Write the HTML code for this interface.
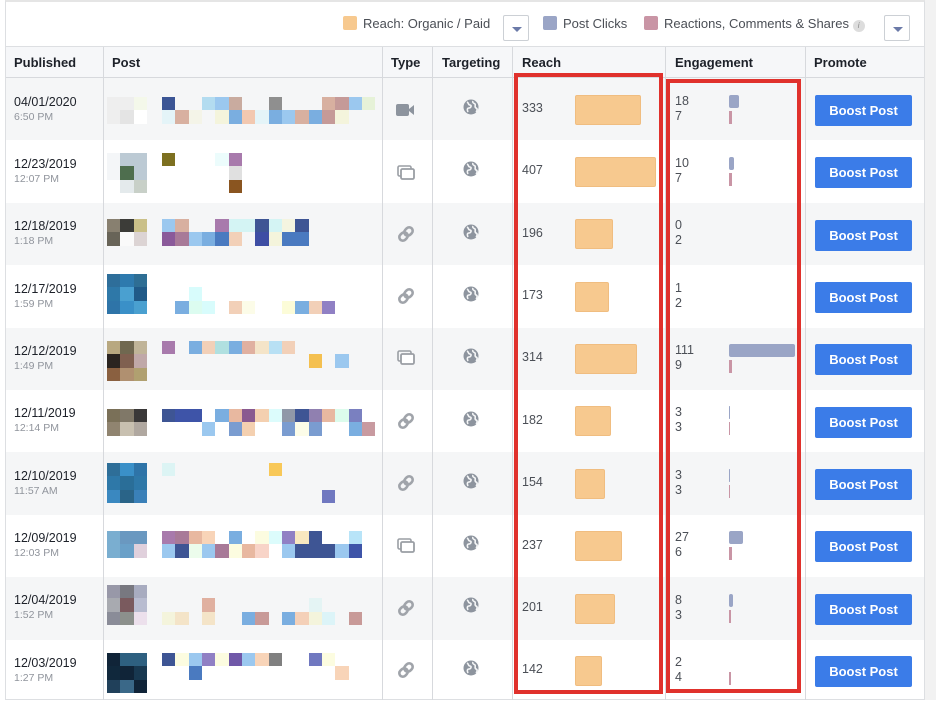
<!DOCTYPE html>
<html><head><meta charset="utf-8"><style>
*{margin:0;padding:0;box-sizing:border-box}
body{width:936px;height:700px;overflow:hidden;background:#fff;font-family:"Liberation Sans",Arial,sans-serif;position:relative;color:#1d2129}
.a{position:absolute}
.hdr{font-weight:bold;font-size:13px;color:#1d2129;top:55px}
.vl{position:absolute;top:47px;bottom:0;width:1px;background:#d7d9dd}
.row{position:absolute;left:6px;width:918px;height:62.4px}
.g{background:#f5f6f7}
.d{position:absolute;left:14px;font-size:12.5px;color:#1d2129}
.t{position:absolute;left:14px;font-size:10.5px;color:#90949c}
.px{position:absolute;display:flex;flex-direction:column}
.px div{display:flex;height:13.33px}
.px i{display:block;width:13.33px;height:13.33px}
.num{position:absolute;font-size:12.5px;color:#4b4f56}
.rb{position:absolute;left:569px;height:30px;background:#f7c98f;border-radius:2px;border:1px solid #f0bd80}
.cb{position:absolute;left:723px;height:13px;background:#9aa5c6;border-radius:2px}
.eb{position:absolute;left:723px;width:3px;height:13px;background:#c995a5}
.btn{position:absolute;left:809px;width:97px;height:31px;background:#3b7ce8;color:#fff;font-weight:bold;font-size:13px;text-align:center;line-height:31px;border-radius:2px}
.ic{position:absolute}
.lg{display:inline-block;width:14px;height:14px;border-radius:2px;vertical-align:-2px;margin-right:6px}
.dd{position:absolute;width:26px;height:26px;border:1px solid #ccd0d5;border-radius:2px;background:#fff}
.dd:after{content:"";position:absolute;left:8px;top:11px;border-left:5px solid transparent;border-right:5px solid transparent;border-top:5px solid #6b7aa8}
</style></head><body>
<div class="a" style="left:5px;top:0;width:920px;height:700px;border:1px solid #dddfe2;border-top:2px solid #e5e5e5"></div>
<div class="a" style="left:925px;top:0;width:11px;height:700px;background:#f2f2f2"></div>
<!-- legend -->
<div class="a" style="left:343px;top:16px;font-size:13px;color:#4b4f56"><span class="lg" style="background:#f7c98f"></span>Reach: Organic / Paid</div>
<div class="dd" style="left:503px;top:15px"></div>
<div class="a" style="left:543px;top:16px;font-size:13px;color:#4b4f56"><span class="lg" style="background:#9aa5c6"></span>Post Clicks</div>
<div class="a" style="left:644px;top:16px;font-size:13px;color:#4b4f56"><span class="lg" style="background:#c995a5"></span>Reactions, Comments &amp; Shares <span style="display:inline-block;width:12px;height:12px;border-radius:6px;background:#ddd;font-size:8px;color:#888;text-align:center;line-height:12px;font-style:italic">i</span></div>
<div class="dd" style="left:884px;top:15px"></div>
<!-- header -->
<div class="a" style="left:6px;top:46px;width:918px;height:32px;background:#f6f7f9;border-top:1px solid #dddfe2;border-bottom:1px solid #d7d9dd"></div>
<div class="a hdr" style="left:14px">Published</div>
<div class="a hdr" style="left:112px">Post</div>
<div class="a hdr" style="left:391px">Type</div>
<div class="a hdr" style="left:442px">Targeting</div>
<div class="a hdr" style="left:522px">Reach</div>
<div class="a hdr" style="left:675px">Engagement</div>
<div class="a hdr" style="left:814px">Promote</div>

<div class="row g" style="top:78px"></div>
<div class="row" style="top:140.4px"></div>
<div class="row g" style="top:202.8px"></div>
<div class="row" style="top:265.2px"></div>
<div class="row g" style="top:327.6px"></div>
<div class="row" style="top:390px"></div>
<div class="row g" style="top:452.4px"></div>
<div class="row" style="top:514.8px"></div>
<div class="row g" style="top:577.2px"></div>
<div class="row" style="top:639.6px"></div>

<div class="vl" style="left:103px"></div><div class="vl" style="left:382px"></div><div class="vl" style="left:432px"></div><div class="vl" style="left:512px"></div><div class="vl" style="left:665px"></div><div class="vl" style="left:805px"></div>

<svg width="0" height="0" style="position:absolute"><defs>
<g id="globe"><circle cx="8" cy="8" r="7.5" fill="#8d949e"/><path d="M4 3c2 1 1 3 3 3s1 3-1 3-2 2-1 4M10 2c-1 2 1 2 2 3s-1 3 1 4 1 3 0 4" stroke="#f5f6f7" stroke-width="1.6" fill="none"/></g>
<g id="link"><g transform="rotate(-45 9 9)" fill="none" stroke="#a0a4aa" stroke-width="2.6"><rect x="1" y="5.5" width="9" height="7" rx="3.5"/><rect x="8" y="5.5" width="9" height="7" rx="3.5"/></g></g>
<g id="gal"><rect x="1" y="1" width="13" height="10" rx="1.5" fill="none" stroke="#9a9ea4" stroke-width="1.6"/><rect x="4" y="4" width="13" height="10" rx="1.5" fill="#fff" stroke="#9a9ea4" stroke-width="1.8"/></g>
<g id="vid"><rect x="0" y="2" width="13" height="12" rx="2" fill="#8d949e"/><path d="M13 7l5-4v10l-5-4z" fill="#8d949e"/></g>
</defs></svg>

<!-- ROW DATA -->
<!-- r1 -->
<div class="d" style="top:95px">04/01/2020</div><div class="t" style="top:111px">6:50 PM</div>
<div class="px" style="left:107px;top:97px"><div><i style="background:#eee"></i><i style="background:#eee"></i><i style="background:#f4f8ea"></i></div><div><i style="background:#eee"></i><i style="background:#e4e4e4"></i><i style="background:#fff"></i></div></div>
<div class="px" style="left:162px;top:97px"><div><i style="background:#3b5595"></i><i></i><i></i><i style="background:#b3dcf0"></i><i style="background:#9bc8ef"></i><i style="background:#c9ab9f"></i><i></i><i></i><i style="background:#8f8f8f"></i><i></i><i></i><i></i><i style="background:#d8b0a0"></i><i style="background:#c59a98"></i><i style="background:#9bc8ef"></i><i style="background:#e6f2d8"></i></div><div><i style="background:#e4f4f8"></i><i style="background:#d8b0a0"></i><i style="background:#f4f4e8"></i><i></i><i style="background:#f4f4dc"></i><i style="background:#7aaee0"></i><i style="background:#f2c8b0"></i><i style="background:#e4f4f8"></i><i style="background:#7aaee0"></i><i style="background:#9bc8ef"></i><i style="background:#d8b0a0"></i><i style="background:#7aaee0"></i><i style="background:#c59a98"></i><i style="background:#f4f4dc"></i></div></div>
<svg class="ic" style="left:396px;top:102px" width="20" height="16"><use href="#vid"/></svg>
<svg class="ic" style="left:463px;top:99px" width="16" height="16"><use href="#globe"/></svg>
<div class="num" style="left:522px;top:101px">333</div><div class="rb" style="left:575px;top:95px;width:66px"></div>
<div class="num" style="left:675px;top:94px">18</div><div class="num" style="left:675px;top:109px">7</div><div class="cb" style="left:729px;top:95px;width:10px"></div><div class="eb" style="left:729px;top:111px"></div>
<div class="btn" style="left:815px;top:95px">Boost Post</div>
<!-- r2 -->
<div class="d" style="top:157px">12/23/2019</div><div class="t" style="top:173px">12:07 PM</div>
<div class="px" style="left:107px;top:153px"><div><i style="background:#f4f6f8"></i><i style="background:#bccad4"></i><i style="background:#bccad4"></i></div><div><i style="background:#f4f6f8"></i><i style="background:#4e6e4e"></i><i style="background:#bccad4"></i></div><div><i></i><i style="background:#e4eaec"></i><i style="background:#c8d0c8"></i></div></div>
<div class="px" style="left:162px;top:153px"><div><i style="background:#7d7020"></i><i></i><i></i><i></i><i style="background:#ecfcfc"></i><i style="background:#a87aac"></i></div><div><i></i><i></i><i></i><i></i><i></i><i style="background:#e0e0e0"></i></div><div><i></i><i></i><i></i><i></i><i></i><i style="background:#8a5520"></i></div></div>
<svg class="ic" style="left:397px;top:165px" width="18" height="16"><use href="#gal"/></svg>
<svg class="ic" style="left:463px;top:161px" width="16" height="16"><use href="#globe"/></svg>
<div class="num" style="left:522px;top:163px">407</div><div class="rb" style="left:575px;top:157px;width:81px"></div>
<div class="num" style="left:675px;top:156px">10</div><div class="num" style="left:675px;top:171px">7</div><div class="cb" style="left:729px;top:157px;width:5px"></div><div class="eb" style="left:729px;top:173px"></div>
<div class="btn" style="left:815px;top:157px">Boost Post</div>
<!-- r3 -->
<div class="d" style="top:219px">12/18/2019</div><div class="t" style="top:235px">1:18 PM</div>
<div class="px" style="left:107px;top:219px"><div><i style="background:#888070"></i><i style="background:#3c3c38"></i><i style="background:#cac088"></i></div><div><i style="background:#686458"></i><i style="background:#fafafa"></i><i style="background:#dcd4d4"></i></div></div>
<div class="px" style="left:162px;top:219px"><div><i style="background:#9bc8ef"></i><i style="background:#d8b0a0"></i><i></i><i></i><i style="background:#a87aac"></i><i style="background:#d4f4f4"></i><i style="background:#d4f4f4"></i><i style="background:#3e5594"></i><i style="background:#d4f4f4"></i><i style="background:#f4f4e0"></i><i style="background:#3e5594"></i></div><div><i style="background:#8a5a9a"></i><i style="background:#a87a98"></i><i style="background:#9bc8ef"></i><i style="background:#7aaee0"></i><i style="background:#4a7ac0"></i><i style="background:#f2d0b8"></i><i></i><i style="background:#3e4ea4"></i><i style="background:#f4f4dc"></i><i style="background:#4a7ac0"></i><i style="background:#4a7ac0"></i></div></div>
<svg class="ic" style="left:397px;top:225px" width="18" height="18"><use href="#link"/></svg>
<svg class="ic" style="left:463px;top:224px" width="16" height="16"><use href="#globe"/></svg>
<div class="num" style="left:522px;top:226px">196</div><div class="rb" style="left:575px;top:219px;width:38px"></div>
<div class="num" style="left:675px;top:218px">0</div><div class="num" style="left:675px;top:233px">2</div>
<div class="btn" style="left:815px;top:220px">Boost Post</div>
<!-- r4 -->
<div class="d" style="top:282px">12/17/2019</div><div class="t" style="top:298px">1:59 PM</div>
<div class="px" style="left:107px;top:274px"><div><i style="background:#2e6e9a"></i><i style="background:#2e7aae"></i><i style="background:#2e6e94"></i></div><div><i style="background:#2e78a8"></i><i style="background:#4aa0d0"></i><i style="background:#205a88"></i></div><div><i style="background:#2e74a8"></i><i style="background:#3a90c8"></i><i style="background:#4aa0d0"></i></div></div>
<div class="px" style="left:162px;top:274px"><div></div><div><i></i><i></i><i style="background:#d8fcfc"></i></div><div><i></i><i style="background:#7aaee0"></i><i style="background:#dcfcf0"></i><i style="background:#d8fcfc"></i><i></i><i style="background:#f2d0b8"></i><i style="background:#fcfce8"></i><i></i><i></i><i style="background:#fcfcd8"></i><i style="background:#7aaee0"></i><i style="background:#f2d0b8"></i><i style="background:#9080c4"></i></div></div>
<svg class="ic" style="left:397px;top:287px" width="18" height="18"><use href="#link"/></svg>
<svg class="ic" style="left:463px;top:286px" width="16" height="16"><use href="#globe"/></svg>
<div class="num" style="left:522px;top:288px">173</div><div class="rb" style="left:575px;top:282px;width:34px"></div>
<div class="num" style="left:675px;top:281px">1</div><div class="num" style="left:675px;top:296px">2</div>
<div class="btn" style="left:815px;top:282px">Boost Post</div>
<!-- r5 -->
<div class="d" style="top:344px">12/12/2019</div><div class="t" style="top:360px">1:49 PM</div>
<div class="px" style="left:107px;top:341px"><div><i style="background:#b8a880"></i><i style="background:#706850"></i><i style="background:#c0b498"></i></div><div><i style="background:#2a2420"></i><i style="background:#806050"></i><i style="background:#c0a8a8"></i></div><div><i style="background:#8a6040"></i><i style="background:#b09070"></i><i style="background:#b0a070"></i></div></div>
<div class="px" style="left:162px;top:341px"><div><i style="background:#a87aac"></i><i></i><i style="background:#7aaee0"></i><i style="background:#f2d0b8"></i><i style="background:#b0e0e0"></i><i style="background:#7aaee0"></i><i style="background:#e0b0a0"></i><i style="background:#f4e4c8"></i><i style="background:#b8e0f4"></i><i style="background:#f2d0b8"></i></div><div><i></i><i></i><i></i><i></i><i></i><i></i><i></i><i></i><i></i><i></i><i></i><i style="background:#f4c050"></i><i></i><i style="background:#9bc8ef"></i></div></div>
<svg class="ic" style="left:397px;top:350px" width="18" height="16"><use href="#gal"/></svg>
<svg class="ic" style="left:463px;top:348px" width="16" height="16"><use href="#globe"/></svg>
<div class="num" style="left:522px;top:350px">314</div><div class="rb" style="left:575px;top:344px;width:62px"></div>
<div class="num" style="left:675px;top:343px">111</div><div class="num" style="left:675px;top:358px">9</div><div class="cb" style="left:729px;top:344px;width:66px"></div><div class="eb" style="left:729px;top:360px"></div>
<div class="btn" style="left:815px;top:344px">Boost Post</div>
<!-- r6 -->
<div class="d" style="top:406px">12/11/2019</div><div class="t" style="top:422px">12:14 PM</div>
<div class="px" style="left:107px;top:409px"><div><i style="background:#7a7058"></i><i style="background:#807868"></i><i style="background:#3a3838"></i></div><div><i style="background:#908470"></i><i style="background:#c8c0b0"></i><i style="background:#b0a8a0"></i></div></div>
<div class="px" style="left:162px;top:409px"><div><i style="background:#3e5594"></i><i style="background:#3e54a8"></i><i style="background:#3e54a8"></i><i></i><i style="background:#7aaee0"></i><i style="background:#e8b8a0"></i><i style="background:#8a5a90"></i><i style="background:#f4d0b0"></i><i style="background:#dcfcfc"></i><i style="background:#9098a8"></i><i style="background:#3e5594"></i><i style="background:#9080b0"></i><i style="background:#e8b8a0"></i><i style="background:#dcfcec"></i><i style="background:#7a80c0"></i></div><div><i></i><i></i><i></i><i style="background:#9bc8ef"></i><i></i><i style="background:#7a9cd0"></i><i style="background:#f4d0b0"></i><i></i><i></i><i style="background:#7a9cd0"></i><i style="background:#fcfce8"></i><i style="background:#7a9cd0"></i><i></i><i></i><i style="background:#7aaee0"></i><i style="background:#c89aa0"></i></div></div>
<svg class="ic" style="left:397px;top:412px" width="18" height="18"><use href="#link"/></svg>
<svg class="ic" style="left:463px;top:411px" width="16" height="16"><use href="#globe"/></svg>
<div class="num" style="left:522px;top:413px">182</div><div class="rb" style="left:575px;top:406px;width:36px"></div>
<div class="num" style="left:675px;top:405px">3</div><div class="num" style="left:675px;top:420px">3</div><div class="cb" style="left:729px;top:406px;width:1px"></div><div class="eb" style="left:729px;top:422px;width:1px"></div>
<div class="btn" style="left:815px;top:407px">Boost Post</div>
<!-- r7 -->
<div class="d" style="top:469px">12/10/2019</div><div class="t" style="top:485px">11:57 AM</div>
<div class="px" style="left:107px;top:463px"><div><i style="background:#2e6e98"></i><i style="background:#3a90c8"></i><i style="background:#2e74a8"></i></div><div><i style="background:#2e78a8"></i><i style="background:#2a6e98"></i><i style="background:#2e78a8"></i></div><div><i style="background:#3a88c0"></i><i style="background:#2a6488"></i><i style="background:#3a80b8"></i></div></div>
<div class="px" style="left:162px;top:463px"><div><i style="background:#dcf4f4"></i><i></i><i></i><i></i><i></i><i></i><i></i><i></i><i style="background:#f8c858"></i></div><div></div><div><i></i><i></i><i></i><i></i><i></i><i></i><i></i><i></i><i></i><i></i><i></i><i></i><i style="background:#7078c0"></i></div></div>
<svg class="ic" style="left:397px;top:474px" width="18" height="18"><use href="#link"/></svg>
<svg class="ic" style="left:463px;top:473px" width="16" height="16"><use href="#globe"/></svg>
<div class="num" style="left:522px;top:475px">154</div><div class="rb" style="left:575px;top:469px;width:30px"></div>
<div class="num" style="left:675px;top:468px">3</div><div class="num" style="left:675px;top:483px">3</div><div class="cb" style="left:729px;top:469px;width:1px"></div><div class="eb" style="left:729px;top:485px;width:1px"></div>
<div class="btn" style="left:815px;top:469px">Boost Post</div>
<!-- r8 -->
<div class="d" style="top:531px">12/09/2019</div><div class="t" style="top:547px">12:03 PM</div>
<div class="px" style="left:107px;top:531px"><div><i style="background:#7aaed0"></i><i style="background:#6a98c0"></i><i style="background:#6a98c0"></i></div><div><i style="background:#7aaed0"></i><i style="background:#6aa0c8"></i><i style="background:#e0d0dc"></i></div></div>
<div class="px" style="left:162px;top:531px"><div><i style="background:#a87aac"></i><i style="background:#a87a98"></i><i style="background:#e8b8a0"></i><i style="background:#f8d4b8"></i><i></i><i style="background:#7aaee0"></i><i></i><i style="background:#fcfce0"></i><i style="background:#dcfcfc"></i><i style="background:#9080c4"></i><i style="background:#f8e8c0"></i><i style="background:#3e5594"></i><i></i><i></i><i style="background:#b8e4f8"></i></div><div><i style="background:#9bc8ef"></i><i style="background:#3e5594"></i><i style="background:#ecfcec"></i><i style="background:#9bc8ef"></i><i style="background:#a87a98"></i><i style="background:#fcfce0"></i><i style="background:#e8b8a0"></i><i style="background:#f8d4c8"></i><i></i><i style="background:#9bc8ef"></i><i style="background:#3e5594"></i><i style="background:#3e5594"></i><i style="background:#3e5594"></i><i style="background:#9bc8ef"></i><i style="background:#3e54a8"></i></div></div>
<svg class="ic" style="left:397px;top:538px" width="18" height="16"><use href="#gal"/></svg>
<svg class="ic" style="left:463px;top:535px" width="16" height="16"><use href="#globe"/></svg>
<div class="num" style="left:522px;top:538px">237</div><div class="rb" style="left:575px;top:531px;width:47px"></div>
<div class="num" style="left:675px;top:530px">27</div><div class="num" style="left:675px;top:545px">6</div><div class="cb" style="left:729px;top:531px;width:14px"></div><div class="eb" style="left:729px;top:547px"></div>
<div class="btn" style="left:815px;top:531px">Boost Post</div>
<!-- r9 -->
<div class="d" style="top:593px">12/04/2019</div><div class="t" style="top:609px">1:52 PM</div>
<div class="px" style="left:107px;top:585px"><div><i style="background:#9898a8"></i><i style="background:#787880"></i><i style="background:#a8acc0"></i></div><div><i style="background:#a8aab0"></i><i style="background:#7a5a5e"></i><i style="background:#b8bcd0"></i></div><div><i style="background:#8a8c98"></i><i style="background:#8c908c"></i><i style="background:#ece0ec"></i></div></div>
<div class="px" style="left:162px;top:585px"><div></div><div><i></i><i></i><i></i><i style="background:#e0b0a0"></i><i></i><i></i><i></i><i></i><i></i><i></i><i></i><i style="background:#e4f4f4"></i></div><div><i style="background:#f4f4dc"></i><i style="background:#f4e4c8"></i><i></i><i style="background:#f4e4c8"></i><i></i><i></i><i style="background:#7aaee0"></i><i style="background:#c89a98"></i><i></i><i style="background:#7aaee0"></i><i style="background:#f4d0b8"></i><i style="background:#f4f4dc"></i><i style="background:#dcf4f8"></i><i></i><i style="background:#c89a98"></i></div></div>
<svg class="ic" style="left:397px;top:599px" width="18" height="18"><use href="#link"/></svg>
<svg class="ic" style="left:463px;top:597px" width="16" height="16"><use href="#globe"/></svg>
<div class="num" style="left:522px;top:600px">201</div><div class="rb" style="left:575px;top:594px;width:40px"></div>
<div class="num" style="left:675px;top:593px">8</div><div class="num" style="left:675px;top:608px">3</div><div class="cb" style="left:729px;top:594px;width:4px"></div><div class="eb" style="left:729px;top:610px;width:2px"></div>
<div class="btn" style="left:815px;top:594px">Boost Post</div>
<!-- r10 -->
<div class="d" style="top:656px">12/03/2019</div><div class="t" style="top:672px">1:27 PM</div>
<div class="px" style="left:107px;top:653px"><div><i style="background:#102438"></i><i style="background:#2e6080"></i><i style="background:#2e6080"></i></div><div><i style="background:#10283c"></i><i style="background:#102438"></i><i style="background:#183850"></i></div><div><i style="background:#20405a"></i><i style="background:#3a6888"></i><i style="background:#102438"></i></div></div>
<div class="px" style="left:162px;top:653px"><div><i style="background:#3e5594"></i><i style="background:#fcfce0"></i><i style="background:#9bc8ef"></i><i style="background:#9080c4"></i><i style="background:#fcfce0"></i><i style="background:#7058a8"></i><i style="background:#9bc8ef"></i><i style="background:#f8d4b8"></i><i style="background:#808080"></i><i></i><i></i><i style="background:#7078c0"></i><i style="background:#fcfce0"></i></div><div><i></i><i></i><i style="background:#4a7ac0"></i><i></i><i></i><i></i><i></i><i></i><i></i><i></i><i></i><i></i><i></i><i style="background:#f8d4b8"></i></div></div>
<svg class="ic" style="left:397px;top:661px" width="18" height="18"><use href="#link"/></svg>
<svg class="ic" style="left:463px;top:660px" width="16" height="16"><use href="#globe"/></svg>
<div class="num" style="left:522px;top:662px">142</div><div class="rb" style="left:575px;top:656px;width:27px"></div>
<div class="num" style="left:675px;top:655px">2</div><div class="num" style="left:675px;top:670px">4</div><div class="eb" style="left:729px;top:672px;width:2px"></div>
<div class="btn" style="left:815px;top:656px">Boost Post</div>

<!-- red boxes -->
<div class="a" style="left:514px;top:73px;width:149px;height:621px;border:4px solid #e0312c"></div>
<div class="a" style="left:666px;top:79px;width:135px;height:614px;border:4px solid #e0312c"></div>
</body></html>
